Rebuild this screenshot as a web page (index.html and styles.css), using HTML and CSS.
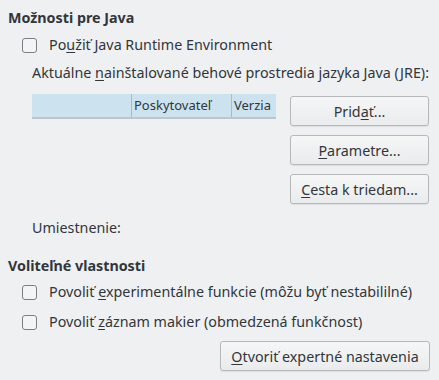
FILE: index.html
```html
<!DOCTYPE html>
<html lang="sk">

<head>
    <meta charset="UTF-8">
    <title>Možnosti pre Java</title>
    <link rel="stylesheet" href="styles.css">
</head>

<body>
    <div class="page">
        <h3 class="group-title">Možnosti pre Java</h3>
        <label class="check first">
            <span class="box"></span>
            <span>Po<u>u</u>žiť Java Runtime Environment</span>
        </label>
        <div class="text">Aktuálne <u>n</u>ainštalované behové prostredia jazyka Java (JRE):</div>

        <div class="jre">
            <div class="jre-list">
                <div class="jre-head">
                    <div class="col c1"></div>
                    <div class="col c2">Poskytovateľ</div>
                    <div class="col c3">Verzia</div>
                </div>
            </div>
            <div class="jre-buttons">
                <button class="button">Prid<u>a</u>ť...</button>
                <button class="button"><u>P</u>arametre...</button>
                <button class="button"><u>C</u>esta k triedam...</button>
            </div>
        </div>

        <div class="text location">Umiestnenie:</div>

        <h3 class="group-title second">Voliteľné vlastnosti</h3>
        <label class="check exp">
            <span class="box"></span>
            <span>Povoliť <u>e</u>xperimentálne funkcie (môžu byť nestabililné)</span>
        </label>
        <label class="check macro">
            <span class="box"></span>
            <span>Povoliť <u>z</u>áznam makier (obmedzená funkčnost)</span>
        </label>
        <div class="footer">
            <button class="button wide"><u>O</u>tvoriť expertné nastavenia</button>
        </div>
    </div>
</body>

</html>
```

FILE: styles.css
```css
body {
    margin: 0;
    background-color: #eff0f1;
    font-family: "Noto Sans", "Open Sans", sans-serif;
    font-size: 14.3px;
    color: #31363b;
}

.page {
    width: 439px;
    height: 380px;
    overflow: hidden;
}

u {
    text-decoration-thickness: 1px;
    text-underline-offset: 2px;
}

.group-title {
    margin: 9px 0 0 8px;
    font-size: 14.3px;
    font-weight: bold;
    line-height: 18px;
}

.group-title.second {
    margin-top: 20px;
}

.check {
    display: flex;
    align-items: center;
    gap: 12px;
    margin: 9px 0 0 22px;
    line-height: 18px;
}

.check.exp {
    margin-top: 8px;
}

.check.macro {
    margin-top: 12px;
}

.box {
    width: 13px;
    height: 13px;
    border: 1px solid #7c7f82;
    border-radius: 3px;
    background-color: #f3f4f5;
}

.text {
    margin: 10px 0 0 32px;
    line-height: 18px;
}

.text.location {
    margin-top: 15px;
}

.jre {
    display: flex;
    margin: 12px 0 0 32px;
}

.jre-list {
    width: 244px;
}

.jre-head {
    display: flex;
    height: 23px;
    background-color: #cce3ef;
    box-shadow: 0 2px 0 #c2c4c6;
    font-size: 13px;
}

.col {
    line-height: 23px;
    padding-left: 2px;
    box-sizing: border-box;
}

.c1 {
    width: 99px;
}

.c2 {
    width: 100px;
    border-left: 1px solid #a4bccb;
}

.c3 {
    flex: 1;
    border-left: 1px solid #a4bccb;
}

.jre-buttons {
    display: flex;
    flex-direction: column;
    gap: 9px;
    margin: 2px 0 0 14px;
}

.button {
    width: 139px;
    height: 30px;
    padding: 0;
    font-family: inherit;
    font-size: 14.3px;
    color: #31363b;
    border: 1px solid #b6b8ba;
    border-radius: 3px;
    background: linear-gradient(#f5f6f6, #eaebec);
    box-shadow: 0 1px 1px rgba(0, 0, 0, 0.08);
}

.footer {
    display: flex;
    justify-content: flex-end;
    margin: 10px 9px 0 0;
}

.button.wide {
    width: 210px;
}
```
